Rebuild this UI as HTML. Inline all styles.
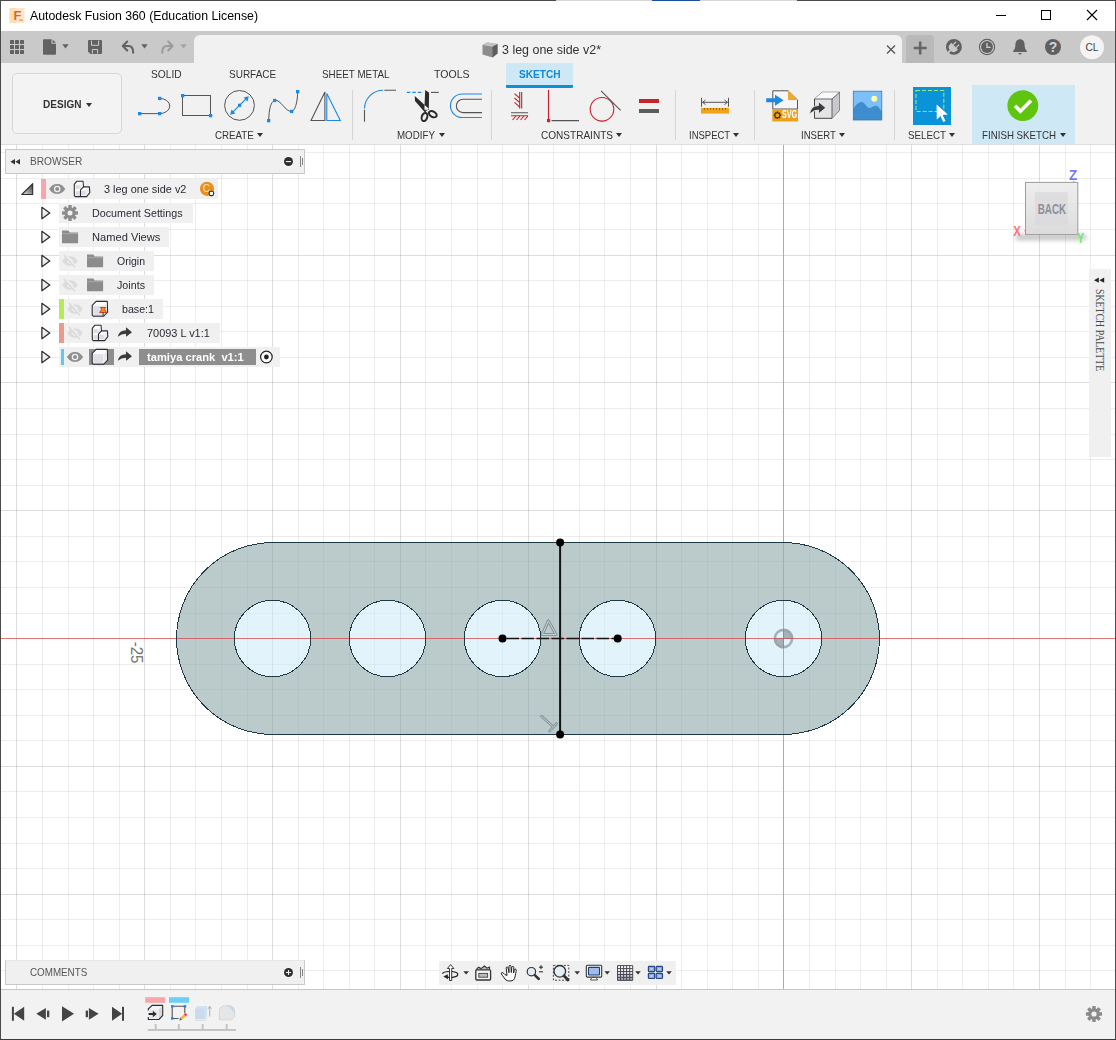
<!DOCTYPE html>
<html lang="en">
<head>
<meta charset="utf-8">
<title>Autodesk Fusion 360 (Education License)</title>
<style>
html,body{margin:0;padding:0;}
body{width:1116px;height:1040px;overflow:hidden;background:#fff;position:relative;font-family:"Liberation Sans",sans-serif;font-size:12px;color:#333;}
.abs{position:absolute;}
.t{position:absolute;white-space:pre;display:block;}
svg{position:absolute;overflow:visible;}
.sep{position:absolute;width:1px;background:#d6d6d6;top:90px;height:50px;}
.dd{position:absolute;width:0;height:0;border-left:3px solid transparent;border-right:3px solid transparent;border-top:4px solid #333;}
.row{position:absolute;height:19.5px;background:#f0f0f0;}
</style>
</head>
<body>
<!-- canvas -->
<svg width="1116" height="1040" viewBox="0 0 1116 1040" style="left:0;top:0">
<g shape-rendering="crispEdges">
<rect x="16" y="145" width="1" height="845" fill="#000" fill-opacity=".135"/>
<rect x="42" y="145" width="1" height="845" fill="#000" fill-opacity=".072"/>
<rect x="68" y="145" width="1" height="845" fill="#000" fill-opacity=".072"/>
<rect x="93" y="145" width="1" height="845" fill="#000" fill-opacity=".072"/>
<rect x="119" y="145" width="1" height="845" fill="#000" fill-opacity=".072"/>
<rect x="144" y="145" width="1" height="845" fill="#000" fill-opacity=".135"/>
<rect x="170" y="145" width="1" height="845" fill="#000" fill-opacity=".072"/>
<rect x="195" y="145" width="1" height="845" fill="#000" fill-opacity=".072"/>
<rect x="221" y="145" width="1" height="845" fill="#000" fill-opacity=".072"/>
<rect x="247" y="145" width="1" height="845" fill="#000" fill-opacity=".072"/>
<rect x="272" y="145" width="1" height="845" fill="#000" fill-opacity=".135"/>
<rect x="298" y="145" width="1" height="845" fill="#000" fill-opacity=".072"/>
<rect x="323" y="145" width="1" height="845" fill="#000" fill-opacity=".072"/>
<rect x="349" y="145" width="1" height="845" fill="#000" fill-opacity=".072"/>
<rect x="374" y="145" width="1" height="845" fill="#000" fill-opacity=".072"/>
<rect x="400" y="145" width="1" height="845" fill="#000" fill-opacity=".135"/>
<rect x="425" y="145" width="1" height="845" fill="#000" fill-opacity=".072"/>
<rect x="451" y="145" width="1" height="845" fill="#000" fill-opacity=".072"/>
<rect x="477" y="145" width="1" height="845" fill="#000" fill-opacity=".072"/>
<rect x="502" y="145" width="1" height="845" fill="#000" fill-opacity=".072"/>
<rect x="528" y="145" width="1" height="845" fill="#000" fill-opacity=".135"/>
<rect x="553" y="145" width="1" height="845" fill="#000" fill-opacity=".072"/>
<rect x="579" y="145" width="1" height="845" fill="#000" fill-opacity=".072"/>
<rect x="604" y="145" width="1" height="845" fill="#000" fill-opacity=".072"/>
<rect x="630" y="145" width="1" height="845" fill="#000" fill-opacity=".072"/>
<rect x="656" y="145" width="1" height="845" fill="#000" fill-opacity=".135"/>
<rect x="681" y="145" width="1" height="845" fill="#000" fill-opacity=".072"/>
<rect x="707" y="145" width="1" height="845" fill="#000" fill-opacity=".072"/>
<rect x="732" y="145" width="1" height="845" fill="#000" fill-opacity=".072"/>
<rect x="758" y="145" width="1" height="845" fill="#000" fill-opacity=".072"/>
<rect x="809" y="145" width="1" height="845" fill="#000" fill-opacity=".072"/>
<rect x="835" y="145" width="1" height="845" fill="#000" fill-opacity=".072"/>
<rect x="860" y="145" width="1" height="845" fill="#000" fill-opacity=".072"/>
<rect x="886" y="145" width="1" height="845" fill="#000" fill-opacity=".072"/>
<rect x="911" y="145" width="1" height="845" fill="#000" fill-opacity=".135"/>
<rect x="937" y="145" width="1" height="845" fill="#000" fill-opacity=".072"/>
<rect x="962" y="145" width="1" height="845" fill="#000" fill-opacity=".072"/>
<rect x="988" y="145" width="1" height="845" fill="#000" fill-opacity=".072"/>
<rect x="1013" y="145" width="1" height="845" fill="#000" fill-opacity=".072"/>
<rect x="1039" y="145" width="1" height="845" fill="#000" fill-opacity=".135"/>
<rect x="1065" y="145" width="1" height="845" fill="#000" fill-opacity=".072"/>
<rect x="1090" y="145" width="1" height="845" fill="#000" fill-opacity=".072"/>
<rect x="1" y="152" width="1114" height="1" fill="#000" fill-opacity=".072"/>
<rect x="1" y="178" width="1114" height="1" fill="#000" fill-opacity=".072"/>
<rect x="1" y="203" width="1114" height="1" fill="#000" fill-opacity=".072"/>
<rect x="1" y="229" width="1114" height="1" fill="#000" fill-opacity=".072"/>
<rect x="1" y="255" width="1114" height="1" fill="#000" fill-opacity=".135"/>
<rect x="1" y="280" width="1114" height="1" fill="#000" fill-opacity=".072"/>
<rect x="1" y="306" width="1114" height="1" fill="#000" fill-opacity=".072"/>
<rect x="1" y="331" width="1114" height="1" fill="#000" fill-opacity=".072"/>
<rect x="1" y="357" width="1114" height="1" fill="#000" fill-opacity=".072"/>
<rect x="1" y="382" width="1114" height="1" fill="#000" fill-opacity=".135"/>
<rect x="1" y="408" width="1114" height="1" fill="#000" fill-opacity=".072"/>
<rect x="1" y="434" width="1114" height="1" fill="#000" fill-opacity=".072"/>
<rect x="1" y="459" width="1114" height="1" fill="#000" fill-opacity=".072"/>
<rect x="1" y="485" width="1114" height="1" fill="#000" fill-opacity=".072"/>
<rect x="1" y="510" width="1114" height="1" fill="#000" fill-opacity=".135"/>
<rect x="1" y="536" width="1114" height="1" fill="#000" fill-opacity=".072"/>
<rect x="1" y="561" width="1114" height="1" fill="#000" fill-opacity=".072"/>
<rect x="1" y="587" width="1114" height="1" fill="#000" fill-opacity=".072"/>
<rect x="1" y="613" width="1114" height="1" fill="#000" fill-opacity=".072"/>
<rect x="1" y="664" width="1114" height="1" fill="#000" fill-opacity=".072"/>
<rect x="1" y="689" width="1114" height="1" fill="#000" fill-opacity=".072"/>
<rect x="1" y="715" width="1114" height="1" fill="#000" fill-opacity=".072"/>
<rect x="1" y="740" width="1114" height="1" fill="#000" fill-opacity=".072"/>
<rect x="1" y="766" width="1114" height="1" fill="#000" fill-opacity=".135"/>
<rect x="1" y="791" width="1114" height="1" fill="#000" fill-opacity=".072"/>
<rect x="1" y="817" width="1114" height="1" fill="#000" fill-opacity=".072"/>
<rect x="1" y="843" width="1114" height="1" fill="#000" fill-opacity=".072"/>
<rect x="1" y="868" width="1114" height="1" fill="#000" fill-opacity=".072"/>
<rect x="1" y="894" width="1114" height="1" fill="#000" fill-opacity=".135"/>
<rect x="1" y="919" width="1114" height="1" fill="#000" fill-opacity=".072"/>
<rect x="1" y="945" width="1114" height="1" fill="#000" fill-opacity=".072"/>
<rect x="1" y="970" width="1114" height="1" fill="#000" fill-opacity=".072"/>
</g>
<!-- body profile -->
<path d="M272.5 542.6 H783.5 A95.9 95.9 0 0 1 783.5 734.4 H272.5 A95.9 95.9 0 0 1 272.5 542.6 Z
M310.7 638.5 a38.2 38.2 0 1 0 -76.4 0 a38.2 38.2 0 1 0 76.4 0 Z
M425.7 638.5 a38.2 38.2 0 1 0 -76.4 0 a38.2 38.2 0 1 0 76.4 0 Z
M540.7 638.5 a38.2 38.2 0 1 0 -76.4 0 a38.2 38.2 0 1 0 76.4 0 Z
M655.7 638.5 a38.2 38.2 0 1 0 -76.4 0 a38.2 38.2 0 1 0 76.4 0 Z
M821.7 638.5 a38.2 38.2 0 1 0 -76.4 0 a38.2 38.2 0 1 0 76.4 0 Z" fill="#8ea6a8" fill-opacity="0.6" fill-rule="evenodd" stroke="none"/>
<g fill="#cbe9f8" fill-opacity="0.55">
<circle cx="272.5" cy="638.5" r="38.2"/><circle cx="387.5" cy="638.5" r="38.2"/><circle cx="502.5" cy="638.5" r="38.2"/><circle cx="617.5" cy="638.5" r="38.2"/><circle cx="783.5" cy="638.5" r="38.2"/>
</g>
<!-- axes -->
<rect x="1" y="638" width="1114" height="1" fill="#d0504e" fill-opacity="0.78" shape-rendering="crispEdges"/>
<rect x="783" y="144" width="1" height="845" fill="#6ad86a" shape-rendering="crispEdges"/>
<g fill="none" stroke="#1e3a46" stroke-width="1" shape-rendering="crispEdges">
<path d="M272.5 542.6 H783.5 A95.9 95.9 0 0 1 783.5 734.4 H272.5 A95.9 95.9 0 0 1 272.5 542.6 Z"/>
<circle cx="272.5" cy="638.5" r="38.2"/><circle cx="387.5" cy="638.5" r="38.2"/><circle cx="502.5" cy="638.5" r="38.2"/><circle cx="617.5" cy="638.5" r="38.2"/><circle cx="783.5" cy="638.5" r="38.2"/>
</g>
<!-- construction -->
<line x1="560.1" y1="542.5" x2="560.1" y2="734.5" stroke="#141414" stroke-width="2"/>
<circle cx="560.1" cy="542.6" r="4" fill="#000"/><circle cx="560.1" cy="734.5" r="4" fill="#000"/>
<line x1="502.5" y1="638.5" x2="617.5" y2="638.5" stroke="#151515" stroke-width="1.3" stroke-dasharray="12.5 2.5" stroke-dashoffset="-4"/>
<circle cx="502.5" cy="638.5" r="4" fill="#000"/><circle cx="617.7" cy="638.5" r="4" fill="#000"/>
<!-- constraint glyphs -->
<path d="M542.3 634.6 L548.3 620.8 L556 634.6 Z" fill="none" stroke="#86949a" stroke-width="3" stroke-linejoin="round"/>
<path d="M542.3 634.6 L548.3 620.8 L556 634.6 Z" fill="none" stroke="#c9d5d5" stroke-width="1" stroke-linejoin="round"/>
<path d="M541.4 716.1 L552.6 726.3 M556.7 723.5 L549.5 731.2" fill="none" stroke="#82939a" stroke-width="2.7" stroke-linecap="round"/>
<path d="M541.4 716.1 L552.6 726.3 M556.7 723.5 L549.5 731.2" fill="none" stroke="#c4d0d0" stroke-width="1" stroke-linecap="round"/>
<!-- origin -->
<g fill="#9aa4aa" fill-opacity=".85">
<path d="M783.5 638.5 V628.6 A9.9 9.9 0 0 1 793.4 638.5 Z"/>
<path d="M783.5 638.5 V648.4 A9.9 9.9 0 0 1 773.6 638.5 Z"/>
</g>
<circle cx="783.5" cy="638.5" r="8.6" fill="none" stroke="#9aa4aa" stroke-opacity=".85" stroke-width="2.6"/>
<rect x="783" y="629" width="1" height="19" fill="#5cae6a"/>
<rect x="774" y="638" width="19" height="1" fill="#b0666a"/>
<text x="0" y="0" transform="translate(130.6 641.7) rotate(90)" font-family="Liberation Sans, sans-serif" font-size="16" fill="#747474" textLength="21.8" lengthAdjust="spacingAndGlyphs">-25</text>
</svg>
<!-- title bar -->
<div class="abs" style="left:1px;top:1px;width:1114px;height:30px;background:#fff"></div>
<svg width="16" height="16" viewBox="0 0 16 16" style="left:9px;top:8px">
<rect x="0.5" y="0" width="15" height="15" fill="#fde6cf"/>
<rect x="0.5" y="0" width="7" height="15" fill="#fbd5ad" fill-opacity=".6"/>
<text x="4.4" y="12" font-family="Liberation Sans, sans-serif" font-weight="bold" font-size="13" fill="#dc6c10">F</text>
<rect x="10" y="11.4" width="4" height="1.5" fill="#f0a050"/>
</svg>
<span class="t" style="left:29.5px;top:7.5px;font-size:12.5px;line-height:16px;color:#000;transform:scaleX(0.9853);transform-origin:0 50%;">Autodesk Fusion 360 (Education License)</span>
<svg width="140" height="31" viewBox="976 0 140 31" style="left:976px;top:0" fill="none" stroke="#000" stroke-width="1" shape-rendering="crispEdges">
<path d="M996 15.5 H1006"/>
<rect x="1041.5" y="10.5" width="9" height="9"/>
<path d="M1087 10 L1097 20 M1097 10 L1087 20" shape-rendering="auto" stroke-width="1.1"/>
</svg>
<!-- grey app bar -->
<div class="abs" style="left:1px;top:31px;width:1114px;height:32px;background:#c9c9c9"></div>
<div class="abs" style="left:194px;top:35px;width:708px;height:29px;background:#f1f1f1;border-radius:6px 6px 0 0"></div>
<div class="abs" style="left:906px;top:35px;width:28px;height:28px;background:#b9b9b9;border-radius:4px 4px 0 0"></div>
<!-- quick access icons -->
<svg width="200" height="32" viewBox="0 31 200 32" style="left:0;top:31px">
<g fill="#626262">
<rect x="10" y="40" width="4" height="4" rx=".6"/><rect x="15" y="40" width="4" height="4" rx=".6"/><rect x="20" y="40" width="4" height="4" rx=".6"/>
<rect x="10" y="45" width="4" height="4" rx=".6"/><rect x="15" y="45" width="4" height="4" rx=".6"/><rect x="20" y="45" width="4" height="4" rx=".6"/>
<rect x="10" y="50" width="4" height="4" rx=".6"/><rect x="15" y="50" width="4" height="4" rx=".6"/><rect x="20" y="50" width="4" height="4" rx=".6"/>
<path d="M43 40.2 a1 1 0 0 1 1 -1 H51.5 V43.8 H56 V53.7 a1 1 0 0 1 -1 1 H44 a1 1 0 0 1 -1 -1 Z M52.6 39.6 L55.8 42.8 H52.6 Z"/>
<path d="M62.3 44.3 H68.7 L65.5 48.6 Z"/>
<path d="M88 41 a1 1 0 0 1 1 -1 H101 a1 1 0 0 1 1 1 V53 a1 1 0 0 1 -1 1 H90.5 L88 51.5 Z"/>
<path d="M141.3 44.3 H147.7 L144.5 48.6 Z"/>
</g>
<path d="M91.5 40.6 V45.3 H98.6 V40.6 M92.4 53.6 V49.5 H97.6 V53.6" fill="none" stroke="#cdcdcd" stroke-width="1"/>
<path d="M127.2 41.6 L122.8 46 L127.2 50.4 M123 46 H128.5 Q133.2 46 133.2 52.8" fill="none" stroke="#626262" stroke-width="2.1" stroke-linecap="round" stroke-linejoin="round"/>
<path d="M168.2 41.6 L172.6 46 L168.2 50.4 M172.4 46 H167 Q162.2 46 162.2 52.8" fill="none" stroke="#9b9b9b" stroke-width="2.1" stroke-linecap="round" stroke-linejoin="round"/>
<path d="M180.3 44.3 H186.7 L183.5 48.6 Z" fill="#a4a4a4"/>
</svg>
<!-- document tab -->
<svg width="18" height="18" viewBox="0 0 18 18" style="left:480.5px;top:40.8px">
<path d="M1.5 4 L6.5 1.5 L16.5 3 L16.5 12.5 L11.5 16.5 L1.5 13.5 Z" fill="#8d8d8d"/>
<path d="M1.5 4 L6.5 1.5 L16.5 3 L11.5 5.8 Z" fill="#c4c4c4"/>
<path d="M11.5 5.8 L16.5 3 L16.5 12.5 L11.5 16.5 Z" fill="#5d5d5d"/>
</svg>
<span class="t" style="left:501.5px;top:42px;font-size:12px;line-height:16px;color:#333;transform:scaleX(1.0377);transform-origin:0 50%;">3 leg one side v2*</span>
<svg width="236" height="32" viewBox="880 31 236 32" style="left:880px;top:31px">
<path d="M887 45.5 L895 53.5 M895 45.5 L887 53.5" stroke="#555" stroke-width="1.3" fill="none"/>
<path d="M920.2 41.5 V54.5 M913.7 48 H926.7" stroke="#666" stroke-width="2.6" fill="none"/>
<!-- extensions -->
<circle cx="953.9" cy="46.9" r="7.9" fill="#606060"/>
<g transform="translate(953.9 46.9) rotate(45)" fill="#c9c9c9"><path d="M-4.7 -1 H4.7 V0.8 Q4.7 5.1 0 5.1 Q-4.7 5.1 -4.7 0.8 Z"/><rect x="-2.7" y="-5.2" width="1.2" height="4.4"/><rect x="1.5" y="-5.2" width="1.2" height="4.4"/><rect x="-0.9" y="4.8" width="1.8" height="4"/></g>
<!-- clock -->
<circle cx="987" cy="47" r="7.6" fill="none" stroke="#606060" stroke-width="1.1"/>
<circle cx="987" cy="47" r="5.9" fill="#606060"/>
<path d="M987 43 V47.4 H990.6" stroke="#d0d0d0" stroke-width="1.3" fill="none"/>
<!-- bell -->
<path d="M1020 39.3 c-3.2 0 -4.6 2.5 -4.6 5.4 c0 3 -0.8 4.8 -2.2 6.1 v1.2 h13.6 v-1.2 c-1.4 -1.3 -2.2 -3.1 -2.2 -6.1 c0 -2.9 -1.4 -5.4 -4.6 -5.4 Z M1018.4 53 a1.6 1.6 0 0 0 3.2 0 Z" fill="#606060"/>
<!-- help -->
<circle cx="1053" cy="47" r="8" fill="#606060"/>
<text x="1053" y="51.6" text-anchor="middle" font-family="Liberation Sans, sans-serif" font-weight="bold" font-size="14" fill="#d4d4d4">?</text>
<!-- avatar -->
<circle cx="1092" cy="47.3" r="12" fill="#f4f4f4"/>
<text x="1092" y="51.4" text-anchor="middle" font-family="Liberation Sans, sans-serif" font-size="11.5" fill="#444" textLength="13" lengthAdjust="spacingAndGlyphs">CL</text>
</svg>
<!-- toolbar -->
<div class="abs" style="left:1px;top:63px;width:1114px;height:82px;background:#f1f1f1;border-bottom:1px solid #dedede;box-sizing:border-box"></div>
<div class="abs" style="left:972px;top:85px;width:103px;height:59px;background:#cfe8f5"></div>
<div class="abs" style="left:506px;top:63px;width:67px;height:24.8px;background:#cee8f6;border-bottom:3.6px solid #0f8fd8;border-radius:0 0 1px 1px;box-sizing:border-box"></div>
<div class="abs" style="left:12.3px;top:73.2px;width:110px;height:61px;border:1.6px solid #d7d7d7;border-radius:5px;box-sizing:border-box;background:#f3f3f3"></div>
<span class="t" style="left:43px;top:96px;font-size:11.5px;line-height:16px;color:#333;font-weight:700;transform:scaleX(0.8731);transform-origin:0 50%;">DESIGN</span>
<div class="dd" style="left:86px;top:102.5px"></div>
<span class="t" style="left:150.8px;top:66px;font-size:11px;line-height:16px;color:#333;transform:scaleX(0.9268);transform-origin:0 50%;">SOLID</span>
<span class="t" style="left:228.8px;top:66px;font-size:11px;line-height:16px;color:#333;transform:scaleX(0.9082);transform-origin:0 50%;">SURFACE</span>
<span class="t" style="left:322.2px;top:66px;font-size:11px;line-height:16px;color:#333;transform:scaleX(0.8953);transform-origin:0 50%;">SHEET METAL</span>
<span class="t" style="left:434.4px;top:66px;font-size:11px;line-height:16px;color:#333;transform:scaleX(0.9597);transform-origin:0 50%;">TOOLS</span>
<span class="t" style="left:518.7px;top:66px;font-size:11px;line-height:16px;color:#1189d4;font-weight:700;transform:scaleX(0.9197);transform-origin:0 50%;">SKETCH</span>
<span class="t" style="left:215.1px;top:126.7px;font-size:11px;line-height:16px;color:#333;transform:scaleX(0.8856);transform-origin:0 50%;">CREATE</span>
<div class="dd" style="left:257px;top:132.5px"></div>
<span class="t" style="left:397.2px;top:126.7px;font-size:11px;line-height:16px;color:#333;transform:scaleX(0.8859);transform-origin:0 50%;">MODIFY</span>
<div class="dd" style="left:438.5px;top:132.5px"></div>
<span class="t" style="left:541px;top:126.7px;font-size:11px;line-height:16px;color:#333;transform:scaleX(0.9132);transform-origin:0 50%;">CONSTRAINTS</span>
<div class="dd" style="left:616px;top:132.5px"></div>
<span class="t" style="left:689px;top:126.7px;font-size:11px;line-height:16px;color:#333;transform:scaleX(0.8619);transform-origin:0 50%;">INSPECT</span>
<div class="dd" style="left:733px;top:132.5px"></div>
<span class="t" style="left:801px;top:126.7px;font-size:11px;line-height:16px;color:#333;transform:scaleX(0.8670);transform-origin:0 50%;">INSERT</span>
<div class="dd" style="left:838.5px;top:132.5px"></div>
<span class="t" style="left:908.1px;top:126.7px;font-size:11px;line-height:16px;color:#333;transform:scaleX(0.8879);transform-origin:0 50%;">SELECT</span>
<div class="dd" style="left:949px;top:132.5px"></div>
<span class="t" style="left:981.8px;top:126.7px;font-size:11px;line-height:16px;color:#333;transform:scaleX(0.8849);transform-origin:0 50%;">FINISH SKETCH</span>
<div class="dd" style="left:1059.5px;top:132.5px"></div>
<div class="sep" style="left:352px"></div><div class="sep" style="left:491px"></div><div class="sep" style="left:675px"></div><div class="sep" style="left:754px"></div><div class="sep" style="left:894px"></div>
<svg width="1116" height="60" viewBox="0 84 1116 60" style="left:0;top:84px" fill="none" stroke-linecap="butt">
<!-- CREATE: line -->
<g stroke="#555" stroke-width="1">
<path d="M139.5 113.6 H159.6 A10.2 7.6 0 0 0 159.6 98.4"/>
<rect x="182.5" y="95.5" width="28" height="20"/>
<circle cx="239.5" cy="105.4" r="14.9"/>
<path d="M268.7 120.5 C269 108 271 102 274.6 100.4 C281 99 285 112 291.7 111.4 C296 110 297.5 100 297.7 91.5"/>
<path d="M324.9 91.9 L311 120.5 H324.9 Z" stroke-width="1.1"/>
</g>
<g fill="#1e88e5" stroke="none">
<rect x="138" y="112" width="3.3" height="3.3"/><rect x="158" y="112" width="3.3" height="3.3"/><rect x="158" y="96.8" width="3.3" height="3.3"/>
<rect x="181" y="94" width="3.3" height="3.3"/><rect x="209" y="114" width="3.3" height="3.3"/>
<rect x="238" y="103.7" width="3.2" height="3.2"/>
<rect x="267" y="119" width="3.3" height="3.3"/><rect x="273" y="98.8" width="3.3" height="3.3"/><rect x="290" y="109.8" width="3.3" height="3.3"/><rect x="296" y="90" width="3.3" height="3.3"/>
<path d="M248.8 96.3 L243.6 97.6 L247.5 101.5 Z M230.2 114.7 L235.4 113.4 L231.5 109.5 Z"/>
</g>
<path d="M232.5 112.4 L246.5 98.4" stroke="#1e88e5" stroke-width="1.2"/>
<path d="M326.8 93.5 L340.3 120.5 H326.8 Z" stroke="#1e88e5" stroke-width="1.1"/>
<!-- MODIFY -->
<path d="M364.5 109.8 V121.8 M384.3 90.2 H396" stroke="#555" stroke-width="1.1"/>
<path d="M364.5 108.6 A18.6 18.6 0 0 1 383.1 90.2" stroke="#1e88e5" stroke-width="1.15"/>
<path d="M406.8 92.4 H423.4" stroke="#1e88e5" stroke-width="1.1" stroke-dasharray="3.5 2"/>
<path d="M431 92.4 H438.8" stroke="#555" stroke-width="1.1"/>
<path d="M414.8 96 L415 101 L425 112.4 L428.8 108.8 Z M425.2 90 L429.1 92.8 L428.8 110 L424.4 109.5 Z" fill="#2b2b2b" stroke="none"/>
<ellipse cx="424.5" cy="117" rx="2.7" ry="4.2" transform="rotate(18 424.5 117)" stroke="#2b2b2b" stroke-width="2"/>
<ellipse cx="432.8" cy="114.2" rx="2.7" ry="4.2" transform="rotate(-60 432.8 114.2)" stroke="#2b2b2b" stroke-width="2"/>
<circle cx="426.4" cy="109.6" r="1" fill="#ddd" stroke="none"/>
<path d="M482 94 H462.2 A11.75 11.75 0 0 0 462.2 117.5 H482" stroke="#1e88e5" stroke-width="1.15"/>
<path d="M482 99.3 H463 A6.65 6.65 0 0 0 463 112.6 H482" stroke="#555" stroke-width="1.1"/>
<!-- CONSTRAINTS -->
<g stroke="#c8232c" stroke-width="1.1">
<path d="M519.7 92 V108.5 M514.5 93.6 L519.5 98 M514.5 98 L519.5 102.4 M514.5 102.4 L519.5 106.8"/>
<path d="M511 115.8 H528 M516 116 L512.5 120 M520 116 L516.5 120 M524 116 L520.5 120 M528 116 L524.5 120"/>
<path d="M548.5 90 V119" stroke-width="1.2"/>
<circle cx="602" cy="109.3" r="11.8"/>
</g>
<path d="M521.7 92 V108.5 M511 112.7 H528 M551.5 120.6 H579 M601.1 90.9 L620.6 110.3" stroke="#555" stroke-width="1.1"/>
<rect x="547" y="119" width="3.2" height="3.2" fill="#c8232c"/>
<rect x="639" y="99" width="20" height="4" fill="#c8232c"/>
<rect x="639" y="109" width="20" height="4" fill="#5c5c5c"/>
<!-- INSPECT -->
<rect x="701" y="108" width="28" height="5.6" fill="#f2a31c"/>
<path d="M704.5 108 v2 M707.5 108 v2 M710.5 108 v2 M713.5 108 v2 M716.5 108 v2 M719.5 108 v2 M722.5 108 v2 M725.5 108 v2" stroke="#8a5a00" stroke-width=".8"/>
<path d="M701.5 97.8 V106.7 M728.5 97.8 V106.7 M702.5 102.3 H727.5 M705.5 100 L702.5 102.3 L705.5 104.6 M724.5 100 L727.5 102.3 L724.5 104.6" stroke="#555" stroke-width="1"/>
<!-- INSERT svg -->
<path d="M772.8 90.8 H788 L797.5 100 V109 H772.8 Z" fill="#f6f6f6" stroke="#555" stroke-width="1"/>
<path d="M788 90.3 L798 100 H788 Z" fill="#f0a928"/>
<rect x="772.3" y="109" width="25.7" height="12.5" fill="#e8a220"/>
<path d="M766.2 98.3 H775 V94.8 L783.6 100.2 L775 105.7 V102.2 H766.2 Z" fill="#1e88e5"/>
<circle cx="777.4" cy="115.3" r="2.5" fill="#e8a220" stroke="#3a2a00" stroke-width="1"/>
<path d="M777.4 111.6 V119 M773.7 115.3 H781.1 M774.8 112.7 L780 117.9 M780 112.7 L774.8 117.9" stroke="#3a2a00" stroke-width="1.5" stroke-dasharray="1.3 4.8"/>
<!-- INSERT derive -->
<path d="M814.5 99 L822 92.3 H839.5 V110.5 L832 118.3 H814.5 Z" fill="#e4e4e6" stroke="#444" stroke-width="1"/>
<path d="M814.5 99 L822 92.3 H839.5 L832 99 Z" fill="#fafafa"/>
<path d="M832 99 L839.5 92.3 V110.5 L832 118.3 Z" fill="#c9c9cd"/>
<path d="M814.5 99 H832 V118.3 M832 99 L839.5 92.3" stroke="#444" stroke-width=".8"/>
<path d="M809.5 114.5 Q810.5 105.5 818.5 105.5 V101.8 L825.8 107.8 L818.5 113.8 V110 Q813 110 809.5 114.5 Z" fill="#3c3c3c" stroke="#f1f1f1" stroke-width=".8"/>
<!-- INSERT image -->
<rect x="853.3" y="91.2" width="28.5" height="28.8" fill="#7cc0f7"/>
<path d="M853.3 109 C856 104 859.5 101.5 862 102 C865 103 867 108.5 870 108 C873 107 875 105 877 106 C879 107 880.5 109.5 881.8 111.5 V120 H853.3 Z" fill="#3d8dcf"/>
<circle cx="874.3" cy="98.8" r="3" fill="#ffffb0"/>
<rect x="853.3" y="91.2" width="28.5" height="28.8" stroke="#2d7fc4" stroke-width=".8"/>
<!-- SELECT -->
<rect x="913" y="87" width="38" height="38" fill="#0b93d9"/>
<rect x="916" y="90.5" width="27.8" height="21" stroke="#97ec7c" stroke-width="1.1" stroke-dasharray="4 2"/>
<path d="M936.6 104.5 L947.8 114.4 L942.6 114.9 L945.5 121 L943.2 122 L940.5 116 L936.8 119.4 Z" fill="#fff"/>
<!-- FINISH -->
<circle cx="1022.8" cy="105.6" r="15.4" fill="#5fc40d"/>
<path d="M1015 105.8 L1020.4 111.2 L1031 100.6" stroke="#fff" stroke-width="3.6"/>
</svg>
<span class="t" style="left:782.3px;top:107.3px;font-size:10px;line-height:16px;color:#fff;font-weight:700;transform:scaleX(0.7195);transform-origin:0 50%;">SVG</span>
<!-- browser -->
<svg width="0" height="0" style="left:0;top:0">
<defs>
<linearGradient id="gtri" x1="0" y1="0" x2="1" y2="1"><stop offset="0" stop-color="#fff"/><stop offset="1" stop-color="#d8d8dc"/></linearGradient>
<linearGradient id="gtri2" x1="0" y1="1" x2="1" y2="0"><stop offset="0" stop-color="#e8e8e8"/><stop offset="1" stop-color="#333"/></linearGradient>
<g id="tri"><path d="M0.7 -5.7 L8.6 0 L0.7 5.7 Z" fill="url(#gtri)" stroke="#2e2e2e" stroke-width="1.3" stroke-linejoin="round"/></g>
<g id="eye"><path d="M-8.1 0 C-5 -4.5 -2 -4.9 0 -4.9 C2 -4.9 5 -4.5 8.1 0 C5 4.5 2 4.9 0 4.9 C-2 4.9 -5 4.5 -8.1 0 Z" fill="#8f8f8f"/><circle r="3.3" fill="#f0f0f0"/><circle r="2" fill="#8f8f8f"/></g>
<g id="eyeoff"><path d="M-7.8 0 C-5 -4.3 -2 -4.7 0 -4.7 C2 -4.7 5 -4.3 7.8 0 C5 4.3 2 4.7 0 4.7 C-2 4.7 -5 4.3 -7.8 0 Z" fill="#dcdcdc"/><circle r="2.8" fill="#ededed"/><path d="M-5.2 -6.2 L5.6 6" stroke="#f0f0f0" stroke-width="2.6"/><path d="M-6.2 -6 L5 6.200" stroke="#d8d8d8" stroke-width="1.3"/></g>
<g id="folder"><path d="M-8 -6.4 H-1.6 L-0.2 -4.6 H8.1 V6.3 H-8 Z" fill="#8c8c8c"/><path d="M-8 -3.4 H8.1" stroke="#b4b4b4" stroke-width=".7"/></g>
<g id="comp"><path d="M-7.7 -4.4 L-5.1 -7.6 H1 L1.5 -1.9 H7.4 L7.8 3.8 L4.6 7.8 H-6.8 L-7.7 6.7 Z" fill="#fbfbfc" stroke="#2c2c34" stroke-width="1.1" stroke-linejoin="round"/><path d="M-6.5 -3.7 H-2.2 V0.3 H-6.5 Z M-6.5 2.4 H-2.2 V6.7 H-6.5 Z M-0.7 2 H3.9 V6.5 H-0.7 Z" fill="#dcdde3"/><path d="M-2 -3.9 L0.4 -6.6 V-1 L-2 0.4 Z M4.2 2 L6.8 -0.8 V3.6 L4.2 6.6 Z" fill="#ebecef"/><path d="M-1.5 1 V7.6 M-1.5 1 L1.5 -1.9" stroke="#2c2c34" stroke-width="1.1" fill="none"/></g>
<g id="body"><path d="M-7.8 -3.5 L-3.9 -7.4 H7.3 L7.6 3.4 L3.7 7.3 H-6.7 L-7.8 6.2 Z" fill="#fbfbfc" stroke="#2c2c34" stroke-width="1.1" stroke-linejoin="round"/><path d="M-6.7 -2.7 H3.3 V6.4 H-6.7 Z" fill="#dfe0e5"/><path d="M3.8 -2.6 L6.7 -5.8 V3 L3.8 6 Z" fill="#e9eaed"/></g>
<g id="arrow"><path d="M-7 4.2 Q-5.5 -2.2 1.2 -2.2 V-5.2 L7.2 -0.3 L1.2 4.3 V1.3 Q-3.5 1.3 -7 4.2 Z" fill="#3a3a3a"/></g>
</defs>
</svg>
<div class="abs" style="left:5px;top:149px;width:300px;height:25px;background:#f0f0f0;border:1px solid #c9c9c9;box-sizing:border-box"></div>
<span class="t" style="left:29.9px;top:153px;font-size:11px;line-height:16px;color:#555;transform:scaleX(0.9201);transform-origin:0 50%;">BROWSER</span>
<div class="row" style="left:46px;top:179px;width:172px"></div>
<div class="abs" style="left:41px;top:179px;width:5px;height:20px;background:#f7a6ac"></div>
<div class="row" style="left:59px;top:203px;width:134px"></div>
<div class="row" style="left:59px;top:227px;width:110px"></div>
<div class="row" style="left:59px;top:251px;width:95px"></div>
<div class="row" style="left:59px;top:275px;width:95px"></div>
<div class="row" style="left:59px;top:299px;width:104px"></div>
<div class="abs" style="left:59px;top:299px;width:5px;height:20px;background:#b7ea5a"></div>
<div class="row" style="left:59px;top:323px;width:161px"></div>
<div class="abs" style="left:59px;top:323px;width:5px;height:20px;background:#e89a8f"></div>
<div class="row" style="left:59px;top:347px;width:221px"></div>
<div class="abs" style="left:61px;top:349px;width:3px;height:16px;background:#5cc8f4"></div>
<div class="abs" style="left:89px;top:349px;width:25px;height:16px;background:#8e8e8e"></div>
<div class="abs" style="left:139px;top:349px;width:117px;height:16px;background:#8e8e8e"></div>
<svg width="310" height="230" viewBox="0 145 310 230" style="left:0;top:145px">
<path d="M10.3 161.8 L15 159 V164.6 Z M15.3 161.8 L20 159 V164.6 Z" fill="#333"/>
<circle cx="288.5" cy="161.5" r="5.3" fill="#fafafa"/><circle cx="288.5" cy="161.5" r="4.5" fill="#2e2e2e"/><rect x="285.9" y="161" width="5.2" height="1.1" fill="#f0f0f0"/>
<path d="M300.5 156 V167 M302.5 158 V165" stroke="#858585" stroke-width="1"/>
<path d="M21.8 194.5 L32.7 183.7 V194.5 Z" fill="url(#gtri2)" stroke="#2e2e2e" stroke-width="1.1" stroke-linejoin="round"/>
<use href="#eye" x="57.2" y="189"/>
<use href="#comp" x="82" y="188.8"/>
<circle cx="207" cy="188.8" r="7.1" fill="#e8901e"/>
<text x="206.3" y="192.3" text-anchor="middle" font-family="Liberation Sans, sans-serif" font-size="10" fill="#fbe3c0">C</text>
<rect x="209.2" y="191.2" width="4.4" height="4.4" rx="1.5" fill="#fff" stroke="#2a2a2a" stroke-width="1.1"/>
<use href="#tri" x="41.2" y="213"/><use href="#tri" x="41.2" y="237"/><use href="#tri" x="41.2" y="261"/><use href="#tri" x="41.2" y="285"/><use href="#tri" x="41.2" y="309"/><use href="#tri" x="41.2" y="333"/><use href="#tri" x="41.2" y="357"/>
<!-- gear -->
<g transform="translate(70 213)" fill="#8c8c8c">
<circle r="5.6"/>
<g id="teeth"><rect x="-1.7" y="-8" width="3.4" height="16" rx=".6"/><rect x="-1.7" y="-8" width="3.4" height="16" rx=".6" transform="rotate(45)"/><rect x="-1.7" y="-8" width="3.4" height="16" rx=".6" transform="rotate(90)"/><rect x="-1.7" y="-8" width="3.4" height="16" rx=".6" transform="rotate(135)"/></g>
<circle r="2.5" fill="#f0f0f0"/>
</g>
<use href="#folder" x="70" y="237"/>
<use href="#eyeoff" x="70" y="261"/><use href="#folder" x="95" y="261"/>
<use href="#eyeoff" x="70" y="285"/><use href="#folder" x="95" y="285"/>
<use href="#eyeoff" x="75" y="309"/><use href="#body" x="100" y="308.8"/>
<path d="M100.4 307.4 h5.4 l-1.3 1.9 l2.1 3.2 h-7 l2.1 -3.2 Z" fill="#f28a1e" stroke="#c8361a" stroke-width=".9" stroke-linejoin="round"/><path d="M103.1 312.6 v3.2" stroke="#2c2c34" stroke-width="1"/>
<use href="#eyeoff" x="75" y="333"/><use href="#comp" x="100" y="332.8"/><use href="#arrow" x="124.8" y="332.5"/>
<use href="#eye" x="75" y="357"/><use href="#body" x="100" y="356.8"/><use href="#arrow" x="124.8" y="356.5"/>
<circle cx="266.4" cy="357" r="5.8" fill="#fff" stroke="#222" stroke-width="1.2"/><circle cx="266.4" cy="357" r="2.4" fill="#222"/>
</svg>
<span class="t" style="left:103.9px;top:181px;font-size:11px;line-height:16px;color:#2a2a36;transform:scaleX(0.9907);transform-origin:0 50%;">3 leg one side v2</span>
<span class="t" style="left:91.8px;top:205px;font-size:11px;line-height:16px;color:#2a2a36;transform:scaleX(0.9738);transform-origin:0 50%;">Document Settings</span>
<span class="t" style="left:91.8px;top:229px;font-size:11px;line-height:16px;color:#2a2a36;transform:scaleX(1.0108);transform-origin:0 50%;">Named Views</span>
<span class="t" style="left:117px;top:253px;font-size:11px;line-height:16px;color:#2a2a36;transform:scaleX(0.9542);transform-origin:0 50%;">Origin</span>
<span class="t" style="left:117px;top:277px;font-size:11px;line-height:16px;color:#2a2a36;transform:scaleX(0.9739);transform-origin:0 50%;">Joints</span>
<span class="t" style="left:122.3px;top:301px;font-size:11px;line-height:16px;color:#2a2a36;transform:scaleX(0.9688);transform-origin:0 50%;">base:1</span>
<span class="t" style="left:147px;top:325px;font-size:11px;line-height:16px;color:#2a2a36;transform:scaleX(0.9936);transform-origin:0 50%;">70093 L v1:1</span>
<span class="t" style="left:147px;top:349px;font-size:11px;line-height:16px;color:#fff;font-weight:700;transform:scaleX(1.0137);transform-origin:0 50%;">tamiya crank  v1:1</span>
<!-- comments + nav bar -->
<div class="abs" style="left:5px;top:960px;width:300px;height:25px;background:#f0f0f0;border:1px solid #c9c9c9;border-top-color:#e6e6e6;box-sizing:border-box"></div>
<span class="t" style="left:30px;top:964.3px;font-size:11px;line-height:16px;color:#555;transform:scaleX(0.8914);transform-origin:0 50%;">COMMENTS</span>
<div class="abs" style="left:439px;top:961px;width:237px;height:24px;background:#f0f0f0"></div>
<!-- bottom bar -->
<div class="abs" style="left:1px;top:989px;width:1114px;height:50px;background:#f2f2f2;border-top:1px solid #c6c6c6;box-sizing:border-box"></div>
<svg width="1116" height="84" viewBox="0 956 1116 84" style="left:0;top:956px" fill="none">
<circle cx="288.5" cy="972.5" r="5.3" fill="#fafafa"/><circle cx="288.5" cy="972.5" r="4.5" fill="#2e2e2e"/><path d="M285.9 972.5 H291.1 M288.5 969.9 V975.1" stroke="#f0f0f0" stroke-width="1.1"/>
<path d="M300.5 967 V978 M302.5 969 V976" stroke="#858585" stroke-width="1"/>
<!-- nav icons -->
<defs><linearGradient id="ggrid" x1="0" y1="0" x2="0" y2="1"><stop offset="0" stop-color="#fff"/><stop offset=".4" stop-color="#eef0f4"/><stop offset="1" stop-color="#8e95a8"/></linearGradient></defs>
<path d="M452 971.5 C456.5 972 458 973.4 457.8 974.6 C457.4 977.2 451 978.2 446.5 976.9 M442.6 973.8 C443 972.4 446 971.6 449 971.5" stroke="#222" stroke-width="1.2" fill="none"/>
<path d="M447.8 974.3 L443.4 976.6 L447.9 979.2 Z" fill="#222"/>
<path d="M449.5 968.5 V980.5 H451.7 V968.5 H453.8 L450.6 964.6 L447.4 968.5 Z" fill="#fff" stroke="#222" stroke-width=".9" stroke-linejoin="round"/>
<g fill="#333"><path d="M463.3 971.3 H469 L466.15 974.6 Z"/><path d="M574.4 971.3 H580 L577.2 974.6 Z"/><path d="M604.4 971.3 H610 L607.2 974.6 Z"/><path d="M635.2 971.3 H640.8 L638 974.6 Z"/><path d="M666.2 971.3 H671.8 L669 974.6 Z"/></g>
<!-- look at -->
<path d="M476 969.8 L478.5 967.2 L481 968.6 L484.5 966 L487 968.2 L489.5 967 V969.8" stroke="#333" stroke-width="1.1" fill="#bbb"/>
<rect x="475.8" y="969.8" width="14.8" height="10.2" rx="1" fill="#f4f4f4" stroke="#333" stroke-width="1.3"/>
<rect x="478.8" y="973.4" width="8.8" height="3.8" fill="#b9bcc4" stroke="#444" stroke-width=".9"/>
<!-- hand -->
<path d="M504.8 974.5 C503.5 972.8 502 972 501.4 972.9 C500.8 974 503 976 505 979 C506 980.6 508 981 510 981 C513 981 514.6 979.5 515 977 C515.3 975 516.3 971.5 516.2 970 C516 968.6 514.6 968.8 514.2 970.2 L513.6 973 L513.8 967.5 C513.8 966 512 966 511.8 967.4 L511.3 972.5 L511 966.4 C510.9 965 509 965 509 966.5 L509 972.6 L508 967.8 C507.7 966.4 506 966.7 506.2 968.2 L507 975.5 Z" fill="#fafafa" stroke="#222" stroke-width="1" stroke-linejoin="round"/>
<!-- zoom -->
<circle cx="531.4" cy="971.7" r="4.2" fill="#e4eff4" stroke="#333" stroke-width="1.2"/>
<path d="M534.8 975.2 L538.8 979" stroke="#333" stroke-width="2.5" stroke-linecap="round"/>
<path d="M539 967.2 H543 M541 965.2 V969.2 M539 971.8 H543" stroke="#222" stroke-width="1"/>
<!-- zoom window -->
<rect x="553.4" y="965.4" width="15.4" height="14.8" stroke="#333" stroke-width=".9" stroke-dasharray="2 1.5"/>
<circle cx="559.8" cy="971.3" r="5.8" fill="#e3eef5" stroke="#333" stroke-width="1.3"/>
<path d="M564 975.8 L568 980" stroke="#333" stroke-width="2.8" stroke-linecap="round"/>
<!-- display -->
<rect x="586.3" y="965.3" width="15.4" height="11.8" rx="1.2" fill="#f6f6f6" stroke="#333" stroke-width="1.1"/>
<rect x="588.5" y="967.4" width="11" height="7.6" rx=".6" fill="#9fbde8" stroke="#1f3f7f" stroke-width="1.1"/>
<path d="M592 977.4 H596 L597.6 980 H590.4 Z" fill="#fff" stroke="#444" stroke-width=".9"/>
<!-- grid -->
<rect x="617.5" y="965.6" width="15.2" height="14.8" fill="url(#ggrid)"/>
<path d="M617.5 965.6 H632.7 V980.4 H617.5 Z M620.5 965.6 V980.4 M623.6 965.6 V980.4 M626.6 965.6 V980.4 M629.7 965.6 V980.4 M617.5 968.6 H632.7 M617.5 971.5 H632.7 M617.5 974.5 H632.7 M617.5 977.4 H632.7" stroke="#4a4a52" stroke-width="1"/>
<!-- viewports -->
<g fill="#86a9de" stroke="#2a4888" stroke-width="1.2"><rect x="648.4" y="966.4" width="6.3" height="5.2" rx=".8"/><rect x="656.2" y="966.4" width="6.3" height="5.2" rx=".8"/><rect x="648.4" y="973.3" width="6.3" height="5.2" rx=".8"/><rect x="656.2" y="973.3" width="6.3" height="5.2" rx=".8"/></g>
<g fill="#b6cdee"><rect x="650.2" y="968" width="2.8" height="2"/><rect x="658" y="968" width="2.8" height="2"/><rect x="650.2" y="974.9" width="2.8" height="2"/><rect x="658" y="974.9" width="2.8" height="2"/></g>
<!-- playback -->
<g fill="#444">
<rect x="11.9" y="1006.8" width="2" height="14"/><path d="M24.2 1006.8 V1020.8 L13.9 1013.8 Z"/>
<path d="M45.9 1007.9 V1019.7 L36.3 1013.8 Z"/><rect x="47" y="1010.6" width="2.3" height="6.6"/>
<path d="M62 1006.2 L74 1013.8 L62 1021.4 Z"/>
<rect x="85.7" y="1010.6" width="2.3" height="6.6"/><path d="M88.9 1007.9 V1019.7 L98.6 1013.8 Z"/>
<path d="M112 1006.8 V1020.8 L122.1 1013.8 Z"/><rect x="122" y="1006.8" width="2" height="14"/>
</g>
<!-- timeline -->
<rect x="145.2" y="997.2" width="20" height="5.6" fill="#f8a5ab"/>
<rect x="169" y="997.2" width="20" height="5.6" fill="#6dcff6"/>
<path d="M147.8 1029.9 H236 M155.7 1024 V1029 M178.8 1024 V1029 M202.7 1024 V1029 M226.7 1024 V1029" stroke="#c4c4c4" stroke-width="2"/>
<!-- tl icon 1 derive -->
<path d="M148.3 1009 L152.1 1005.4 H162.7 V1015.5 L158.8 1019.5 H148.3 Z" fill="#f4f4f6"/>
<path d="M149.3 1009.8 H157.8 V1018.6 H149.3 Z" fill="#e6e6ea"/>
<path d="M158.7 1009.4 L161.8 1006.4 V1015 L158.7 1018.2 Z" fill="#d4d4da"/>
<path d="M148.3 1010.6 V1009 L152.1 1005.4 H162.7 V1015.5 L158.8 1019.5 H148.3 V1017" fill="none" stroke="#2c2c30" stroke-width="1.1" stroke-linejoin="round"/>
<path d="M148.6 1012.9 H152.8 V1010.7 L156.8 1014 L152.8 1017.3 V1015.1 H148.6 Z" fill="#2c2c30"/>
<!-- tl icon 2 sketch -->
<path d="M184.8 1013 V1006.3 H172.2 V1018.5 H178.6" fill="none" stroke="#555" stroke-width="1.1"/>
<g fill="#1e88e5"><rect x="171" y="1005.1" width="2.5" height="2.5"/><rect x="183.7" y="1005.1" width="2.5" height="2.5"/><rect x="171" y="1017.2" width="2.5" height="2.5"/></g>
<path d="M182.0 1019.8 L185.6 1016.4 L183.8 1014.4 L180.1 1017.8 Z" fill="#f4b53c"/>
<path d="M185.6 1016.4 L187.0 1015.1 L186.5 1013.7 L185.2 1013.1 L183.8 1014.4 Z" fill="#ee3f3f"/>
<path d="M179.4 1020.4 L182.0 1019.8 L180.1 1017.8 Z" fill="#555"/>
<!-- tl icon 3 extrude (faded) -->
<path d="M195 1008.5 L197.5 1006 H207 V1016.5 L204.5 1019 H195 Z" fill="#d3e2ef"/>
<path d="M195 1008.5 H204.5 V1019 H195 Z" fill="#cadcec"/>
<path d="M195.5 1020.2 H205 L207.2 1018" stroke="#d8d8d8" stroke-width="1"/>
<path d="M209.7 1007 V1016.5 M208 1008.8 L209.7 1006.3 L211.4 1008.8" stroke="#b0b0b0" stroke-width="1"/>
<!-- tl icon 4 fillet (faded) -->
<path d="M219.4 1011.5 Q219.4 1005.8 225.5 1005.8 H229 Q234.6 1005.8 234.6 1012 V1016.5 L231.5 1019.8 H219.4 Z" fill="#e6e6e8" stroke="#d0d0d0" stroke-width=".8"/>
<path d="M226 1005.8 H229 Q234.6 1005.8 234.6 1012 V1014 Q232 1008 226 1005.8 Z" fill="#c3d8ea"/>
<!-- settings gear -->
<g transform="translate(1094 1014)" fill="#8a8a8a">
<circle r="5.7"/>
<rect x="-1.7" y="-8.1" width="3.4" height="16.2" rx=".6"/><rect x="-1.7" y="-8.1" width="3.4" height="16.2" rx=".6" transform="rotate(45)"/><rect x="-1.7" y="-8.1" width="3.4" height="16.2" rx=".6" transform="rotate(90)"/><rect x="-1.7" y="-8.1" width="3.4" height="16.2" rx=".6" transform="rotate(135)"/>
<circle r="2.6" fill="#f2f2f2"/>
</g>
</svg>
<!-- view cube -->
<svg width="100" height="90" viewBox="1000 160 100 90" style="left:1000px;top:160px">
<defs>
<linearGradient id="gcube" x1="0" y1="0" x2="0" y2="1"><stop offset="0" stop-color="#ededed"/><stop offset="1" stop-color="#dadada"/></linearGradient>
<filter id="blur1" x="-20%" y="-300%" width="140%" height="700%"><feGaussianBlur stdDeviation="2.4"/></filter>
</defs>
<rect x="1016" y="235" width="70" height="4.5" fill="#000" fill-opacity=".3" filter="url(#blur1)"/>
<path d="M1023.8 230.8 H1025" stroke="#f88" stroke-width="1"/>
<path d="M1073.9 180.8 V182" stroke="#88f" stroke-width="1"/>
<rect x="1025.5" y="182.4" width="52.3" height="52.2" fill="url(#gcube)" fill-opacity=".94" stroke="#9c9c9c" stroke-width="1"/>
<rect x="1034.9" y="192.1" width="32.8" height="32.6" fill="#d9dade" fill-opacity=".75"/>
<text x="1052" y="213.9" text-anchor="middle" font-family="Liberation Sans, sans-serif" font-weight="bold" font-size="14.5" fill="#8b8f9a" textLength="28.5" lengthAdjust="spacingAndGlyphs">BACK</text>
<text x="1069" y="179.5" font-family="Liberation Sans, sans-serif" font-weight="bold" font-size="15.5" fill="#7676ff" textLength="8.2" lengthAdjust="spacingAndGlyphs">Z</text>
<text x="1013.2" y="236" font-family="Liberation Sans, sans-serif" font-weight="bold" font-size="15" fill="#ff7272" textLength="7.6" lengthAdjust="spacingAndGlyphs">X</text>
<text x="1077" y="242.9" font-family="Liberation Sans, sans-serif" font-weight="bold" font-size="15" fill="#6eea6e" textLength="7.2" lengthAdjust="spacingAndGlyphs">Y</text>
</svg>
<!-- sketch palette -->
<div class="abs" style="left:1089px;top:269px;width:22px;height:188px;background:#f0f0f0"></div>
<svg width="22" height="20" viewBox="1089 270 22 20" style="left:1089px;top:270px"><path d="M1094 280.2 L1098.8 277.6 V282.8 Z M1099.4 280.2 L1104.2 277.6 V282.8 Z" fill="#222"/></svg>
<div class="abs" style="left:1096px;top:288.8px;width:0;height:0"><span style="position:absolute;left:0;top:0;white-space:nowrap;font-family:'Liberation Serif',serif;font-size:11.5px;line-height:10px;color:#484848;transform-origin:0 0;transform:rotate(90deg) translate(0,-9px) scaleX(0.854)">SKETCH PALETTE</span></div>
<!-- window frame -->
<div class="abs" style="left:0;top:0;width:1px;height:1040px;background:#4a4a4a"></div>
<div class="abs" style="left:1115px;top:0;width:1px;height:1040px;background:#4a4a4a"></div>
<div class="abs" style="left:0;top:1039px;width:1116px;height:1px;background:#3c3c3c"></div>
<div class="abs" style="left:0;top:0;width:556px;height:1px;background:#4a4a4a"></div>
<div class="abs" style="left:556px;top:0;width:96px;height:1px;background:#d8d8d8"></div>
<div class="abs" style="left:652px;top:0;width:48px;height:1px;background:#1c4f9c"></div>
<div class="abs" style="left:700px;top:0;width:97px;height:1px;background:#d8d8d8"></div>
<div class="abs" style="left:797px;top:0;width:319px;height:1px;background:#4a4a4a"></div>
</body>
</html>
